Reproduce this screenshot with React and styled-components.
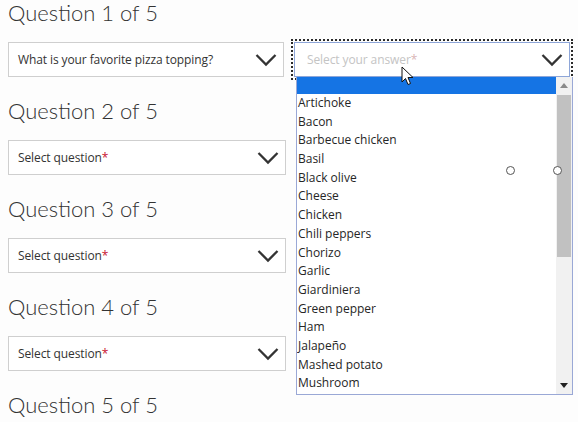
import styled, { createGlobalStyle } from "styled-components";

const GlobalStyle = createGlobalStyle`
	html, body {
		margin: 0;
		padding: 0;
		background: #fdfdfd;
	}
	body {
		font-family: "Open Sans", "Liberation Sans", sans-serif;
	}
`;

const Page = styled.main`
	position: relative;
	width: 578px;
	height: 422px;
	overflow: hidden;
	padding: 0 8px;
	box-sizing: border-box;
`;

const QuestionBlock = styled.section`
	margin-bottom: 21px;
`;

const Heading = styled.h2`
	margin: 0 0 16px;
	height: 26px;
	font-family: Lato, "Open Sans", sans-serif;
	font-weight: 300;
	font-size: 22px;
	line-height: 26px;
	color: #333;
`;

const Row = styled.div`
	display: flex;
	gap: 10px;
`;

const SelectBox = styled.div`
	position: relative;
	box-sizing: border-box;
	width: 278px;
	height: 35px;
	display: flex;
	align-items: center;
	justify-content: space-between;
	padding: 0 6px 0 ${p => (p.$focused ? "12px" : "9px")};
	background: #fff;
	border: 1px solid ${p => (p.$focused ? "#8ea6d8" : "#cfcfcf")};
	outline: ${p => (p.$focused ? "2px dotted #2a2a2a" : "none")};
	outline-offset: 1px;
`;

const SelectText = styled.span`
	font-size: 12px;
	letter-spacing: -0.1px;
	color: ${p => (p.$placeholder ? "#c4c4c4" : "#333")};
	white-space: nowrap;
`;

const Required = styled.span`
	color: ${p => (p.$muted ? "#d9b5b5" : "#c8102e")};
`;

const Dropdown = styled.div`
	position: absolute;
	top: calc(100% + 1px);
	left: 1px;
	width: 277px;
	height: 318px;
	box-sizing: border-box;
	display: flex;
	background: #fff;
	border: 1px solid #9aa8d6;
	border-top: none;
	z-index: 2;
`;

const Options = styled.ul`
	flex: 1;
	margin: 0;
	padding: 0;
	list-style: none;
	overflow: hidden;
`;

const Option = styled.li`
	height: ${p => (p.$highlight ? "17px" : "18.7px")};
	line-height: 18.7px;
	padding-left: 1px;
	font-size: 12px;
	color: #262626;
	background: ${p => (p.$highlight ? "#1574e4" : "transparent")};
	white-space: nowrap;
`;

const Scrollbar = styled.div`
	width: 16px;
	display: flex;
	flex-direction: column;
	background: #f1f1f1;
`;

const ScrollArrow = styled.div`
	height: 17px;
	display: flex;
	align-items: center;
	justify-content: center;
	flex-shrink: 0;
`;

const Thumb = styled.div`
	margin: 1px 1px 0;
	height: 162px;
	background: #c1c1c1;
`;

const Track = styled.div`
	flex: 1;
`;

const Handle = styled.span`
	position: absolute;
	top: ${p => p.$y}px;
	left: ${p => p.$x}px;
	width: 7px;
	height: 7px;
	border: 1.5px solid #555;
	border-radius: 50%;
	background: #fff;
	z-index: 3;
`;

const Cursor = styled.svg`
	position: absolute;
	top: 66px;
	left: 401px;
	z-index: 4;
`;

const Chevron = () => (
	<svg width="22" height="14" viewBox="0 0 22 14">
		<path d="M1.5 2 L11 11.5 L20.5 2" fill="none" stroke="#333" strokeWidth="2.3" />
	</svg>
);

const toppings = [
	"Artichoke",
	"Bacon",
	"Barbecue chicken",
	"Basil",
	"Black olive",
	"Cheese",
	"Chicken",
	"Chili peppers",
	"Chorizo",
	"Garlic",
	"Giardiniera",
	"Green pepper",
	"Ham",
	"Jalapeño",
	"Mashed potato",
	"Mushroom",
];

const AnswerSelect = () => (
	<SelectBox $focused>
		<SelectText $placeholder>
			Select your answer<Required $muted>*</Required>
		</SelectText>
		<Chevron />
		<Dropdown>
			<Options>
				<Option $highlight />
				{toppings.map(t => (
					<Option key={t}>{t}</Option>
				))}
			</Options>
			<Scrollbar>
				<ScrollArrow>
					<svg width="8" height="5" viewBox="0 0 8 5">
						<path d="M0 5 L4 0 L8 5 Z" fill="#8a8a8a" />
					</svg>
				</ScrollArrow>
				<Thumb />
				<Track />
				<ScrollArrow>
					<svg width="8" height="5" viewBox="0 0 8 5">
						<path d="M0 0 L8 0 L4 5 Z" fill="#222" />
					</svg>
				</ScrollArrow>
			</Scrollbar>
		</Dropdown>
	</SelectBox>
);

const questions = [1, 2, 3, 4, 5];

const App = () => {
	return (
		<>
			<GlobalStyle />
			<Page>
				{questions.map(n => (
					<QuestionBlock key={n}>
						<Heading>Question {n} of 5</Heading>
						{n < 5 && (
							<Row>
								<SelectBox>
									{n === 1 ? (
										<SelectText>What is your favorite pizza topping?</SelectText>
									) : (
										<SelectText>
											Select question<Required>*</Required>
										</SelectText>
									)}
									<Chevron />
								</SelectBox>
								{n === 1 && <AnswerSelect />}
							</Row>
						)}
					</QuestionBlock>
				))}
				<Handle $x={506} $y={166} />
				<Handle $x={553} $y={166} />
				<Cursor width="13" height="20" viewBox="0 0 13 20">
					<path
						d="M1 1 L1 16 L4.5 12.5 L7 18.5 L9.5 17.5 L7 11.5 L12 11.5 Z"
						fill="#fff"
						stroke="#111"
						strokeWidth="1"
						strokeLinejoin="round"
					/>
				</Cursor>
			</Page>
		</>
	);
};

export default App;
